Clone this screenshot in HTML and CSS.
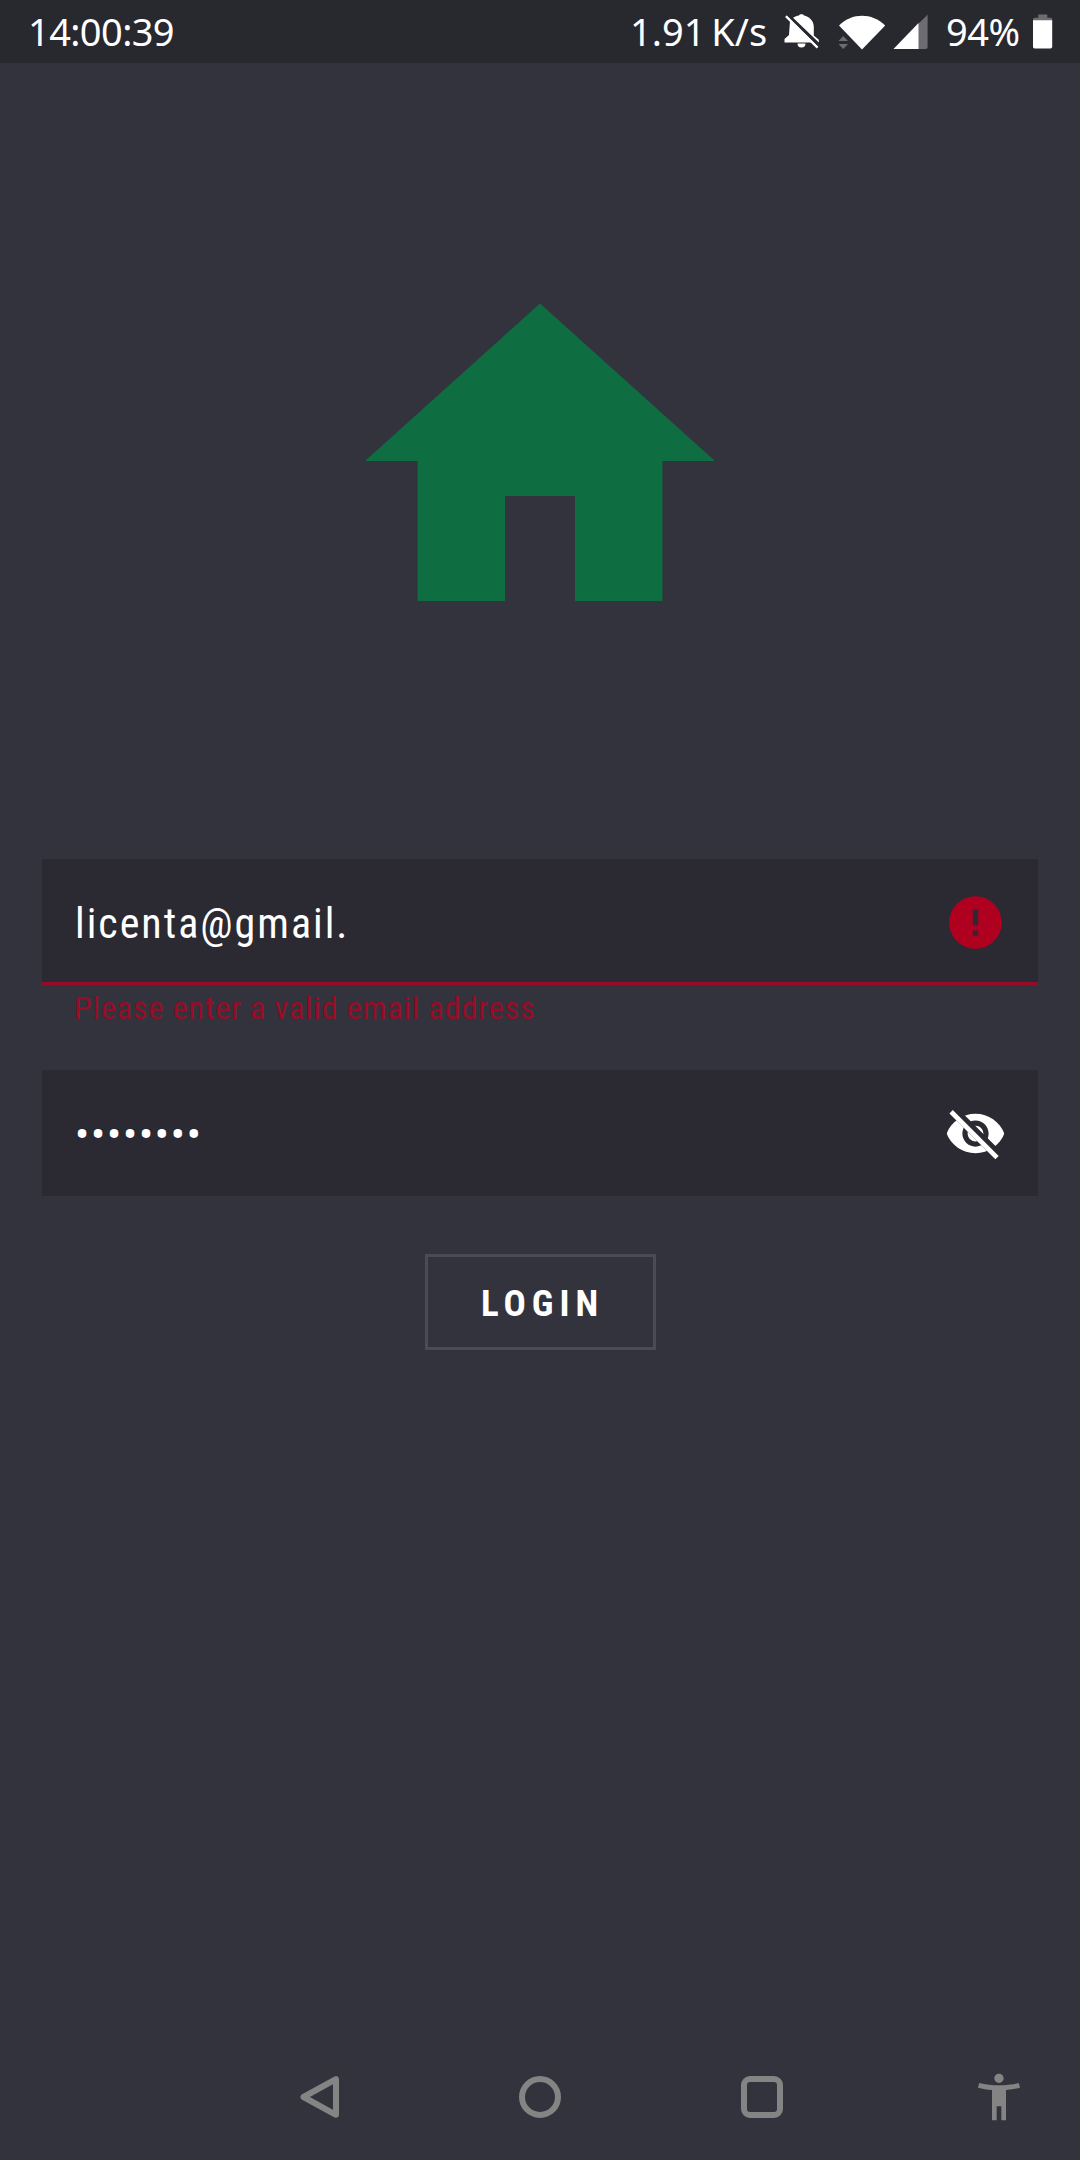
FILE: index.html
```html
<!DOCTYPE html>
<html lang="en">
<head>
<meta charset="utf-8">
<title>Login</title>
<link rel="stylesheet" href="styles.css">
</head>
<body>
<div class="screen">
  <header class="status">
    <span class="clock">14:00:39</span>
    <span class="rate">1.91 K/s</span>
    <svg class="bell" width="36" height="36" viewBox="0 0 36 36">
      <path fill="#fff" d="M6 7 28 28.500H.5v-3.400L5 21zM9 3.800C11 2.500 13 1.800 15 1.500c.4-1.700 4.600-1.700 5 0 5.500 1.200 9.800 5.500 9.800 11.300v8.700l5 4.300v2.700zM13.500 29.500h8a4 4 0 0 1-8 0z"/>
      <path stroke="#fff" stroke-width="2.600" d="M2 2.200 33.600 33.600"/>
      <path stroke="#28282f" stroke-width="1.900" d="M3.800 .8 35.400 32.200"/>
    </svg>
    <svg class="wifi" width="48" height="36" viewBox="0 0 48 36">
      <path fill="#fff" d="M1 11.400C14-1.500 34-1.500 47.200 11.400L24 35.500z"/>
      <path fill="#6c6c72" d="M.5 27h9.500L5.200 22zM.5 30h9.500L5.200 35z"/>
    </svg>
    <svg class="signal" width="36" height="36" viewBox="0 0 36 36">
      <path fill="#6c6c72" d="M25 10 34.600.7V33q0 2-2 2H25z"/>
      <path fill="#fff" d="M.5 35 25.500 9v26z"/>
    </svg>
    <span class="percent">94%</span>
    <svg class="battery" width="20" height="36" viewBox="0 0 20 36">
      <path fill="#6c6c72" d="M5.300.5h9v3.200h3.200q1.700 0 1.700 1.700v2H0v-2q0-1.700 1.700-1.700h3.600z"/>
      <path fill="#fff" d="M0 6.300h19.200v26.500q0 1.700-1.700 1.700H1.700Q0 34.500 0 32.800z"/>
    </svg>
  </header>
  <main class="main">
    <svg class="home" width="420" height="420" viewBox="0 0 24 24"><path fill="#0f6d42" d="M10 20v-6h4v6h5v-8h3L12 3 2 12h3v8z"/></svg>
    <div class="field invalid">
      <span class="email">licenta@gmail.</span>
      <svg width="63" height="63" viewBox="0 0 24 24"><path fill="#b00020" d="M12 2C6.480 2 2 6.480 2 12s4.480 10 10 10 10-4.480 10-10S17.520 2 12 2zm1 15h-2v-2h2v2zm0-4h-2V7h2v6z"/></svg>
    </div>
    <p class="helper">Please enter a valid email address</p>
    <div class="field">
      <span class="dots">••••••••</span>
      <svg width="63" height="63" viewBox="0 0 24 24">
        <clipPath id="strike"><path d="M2 4.270 19.730 22 23 23H1V4.270zM4.540 1.730 22.270 19.460H23V1H4.540z"/></clipPath>
        <path clip-path="url(#strike)" fill="#fff" d="M12 4.500C7 4.500 2.730 7.610 1 12c1.730 4.390 6 7.500 11 7.500s9.270-3.110 11-7.500c-1.730-4.390-6-7.500-11-7.500zM12 17c-2.760 0-5-2.240-5-5s2.240-5 5-5 5 2.240 5 5-2.240 5-5 5zm0-8c-1.660 0-3 1.340-3 3s1.340 3 3 3 3-1.340 3-3-1.340-3-3-3z"/>
        <path stroke="#fff" stroke-width="1.800" d="M2.700 3.700 20.200 21.200"/>
      </svg>
    </div>
    <button class="login" type="button">LOGIN</button>
  </main>
  <nav class="nav">
    <svg class="back" width="42" height="44" viewBox="0 0 42 44"><path fill="none" stroke="#848484" stroke-width="6" stroke-linejoin="round" d="M37 4.200V39.800L4.500 22z"/></svg>
    <svg class="circle" width="42" height="42" viewBox="0 0 42 42"><circle cx="21" cy="21" r="18" fill="none" stroke="#848484" stroke-width="6"/></svg>
    <svg class="recent" width="42" height="42" viewBox="0 0 42 42"><rect x="3" y="3" width="36" height="36" rx="6" fill="none" stroke="#848484" stroke-width="6"/></svg>
    <svg class="access" width="56" height="56" viewBox="0 0 24 24"><path fill="#848484" d="M20.500 6c-2.610.7-5.670 1-8.500 1s-5.890-.3-8.500-1L3 8c1.860.5 4 .83 6 1v13h2v-6h2v6h2V9c2-.17 4.140-.5 6-1l-.5-2zM12 6c1.100 0 2-.9 2-2s-.9-2-2-2-2 .9-2 2 .9 2 2 2z"/></svg>
  </nav>
</div>
</body>
</html>
```
FILE: styles.css
```css
* { box-sizing: border-box; }
body { margin: 0; background: #33333d; color: #fff; }
svg { display: block; flex: none; }
.screen {
  width: 1080px;
  height: 2160px;
  display: flex;
  flex-direction: column;
  background: #33333d;
  font-family: "Roboto Condensed", Roboto, sans-serif;
  font-stretch: 75%;
}
.status {
  height: 63px;
  display: flex;
  align-items: center;
  padding-left: 28px;
  background: #28282f;
  font: 38px/63px "Noto Sans", sans-serif;
  white-space: nowrap;
}
.clock { width: 602px; letter-spacing: -0.6px; }
.rate { width: 154px; word-spacing: -4px; }
.wifi { margin-left: 18px; }
.signal { margin-left: 7px; }
.percent { width: 87px; margin-left: 17px; letter-spacing: -0.5px; }
.main {
  flex: 1;
  display: flex;
  flex-direction: column;
  align-items: center;
  padding: 188px 42px 0;
}
.home { margin-bottom: 188px; }
.field {
  width: 100%;
  height: 126px;
  display: flex;
  align-items: center;
  justify-content: space-between;
  padding: 0 31px 0 33px;
  background: #2b2931;
  font-size: 42px;
}
.invalid { padding-top: 3px; border-bottom: 3px solid #970c26; }
.email { padding-top: 3px; letter-spacing: 2px; }
.helper {
  align-self: stretch;
  height: 85px;
  margin: 0;
  padding-left: 32px;
  font-size: 32px;
  line-height: 46px;
  letter-spacing: 0.900px;
  color: #970c26;
}
.dots { padding-top: 2px; letter-spacing: 1.800px; }
.login {
  width: 231px;
  height: 96px;
  margin-top: 58px;
  padding: 2px 0 0 5px;
  border: 3px solid #4b4b55;
  background: none;
  color: #fff;
  font: inherit;
  font-stretch: 75%;
  font-size: 37px;
  font-weight: 700;
  letter-spacing: 6px;
}
.nav {
  height: 126px;
  display: flex;
  align-items: center;
  padding-left: 299px;
}
.circle { margin-left: 178px; }
.recent { margin-left: 180px; }
.access { margin-left: 188px; }
```
